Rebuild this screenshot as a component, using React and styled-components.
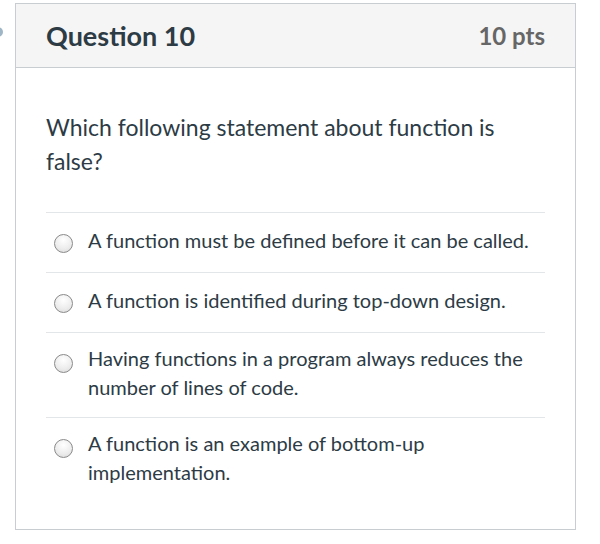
import React from "react";
import styled, { createGlobalStyle } from "styled-components";

const GlobalStyle = createGlobalStyle`
  html, body {
    margin: 0;
    padding: 0;
    background: #ffffff;
    font-family: Lato, "Open Sans", sans-serif;
  }
`;

const answers = [
  "A function must be defined before it can be called.",
  "A function is identified during top-down design.",
  "Having functions in a program always reduces the number of lines of code.",
  "A function is an example of bottom-up implementation.",
];

const Page = () => {
  return (
    <>
      <GlobalStyle />
      <Wrap>
        <Marker />
        <Card>
          <Header>
            <Title>Question 10</Title>
            <Points>10 pts</Points>
          </Header>
          <Body>
            <Prompt>Which following statement about function is false?</Prompt>
            <Answers>
              {answers.map((text, i) => (
                <Answer key={i}>
                  <Radio />
                  <AnswerText>{text}</AnswerText>
                </Answer>
              ))}
            </Answers>
          </Body>
        </Card>
      </Wrap>
    </>
  );
};

export default Page;

const Wrap = styled.div`
  position: relative;
  padding: 3px 0 0 15px;
`;

const Marker = styled.div`
  position: absolute;
  left: -7px;
  top: 27px;
  width: 10px;
  height: 10px;
  border-radius: 50%;
  background: #9fb6c6;
`;

const Card = styled.div`
  width: 559px;
  border: 1px solid #c7cdd1;
  box-sizing: content-box;
`;

const Header = styled.div`
  display: flex;
  align-items: center;
  justify-content: space-between;
  height: 63px;
  padding: 0 30px;
  background: #f5f5f5;
  border-bottom: 1px solid #c7cdd1;
`;

const Title = styled.div`
  font-weight: 700;
  font-size: 27px;
  color: #2d3b45;
`;

const Points = styled.div`
  font-weight: 700;
  font-size: 24px;
  color: #666666;
`;

const Body = styled.div`
  padding: 42px 30px 27px;
`;

const Prompt = styled.div`
  font-size: 23px;
  line-height: 34px;
  color: #2d3b45;
  width: 470px;
`;

const Answers = styled.div`
  margin-top: 34px;
  border-top: 1px solid #e3e6e8;
`;

const Answer = styled.div`
  display: flex;
  align-items: flex-start;
  padding: 11px 0 15px 8px;
  border-bottom: 1px solid #e3e6e8;

  &:last-child {
    border-bottom: none;
  }
`;

const Radio = styled.span`
  flex: none;
  width: 17px;
  height: 17px;
  margin-top: 10px;
  margin-right: 15px;
  border-radius: 50%;
  border: 1px solid #8a8a8a;
  background: radial-gradient(circle at 50% 30%, #ffffff 0%, #ececec 60%, #d6d6d6 100%);
`;

const AnswerText = styled.div`
  display: flex;
  align-items: center;
  min-height: 33px;
  font-size: 20px;
  line-height: 29px;
  color: #2d3b45;
  max-width: 458px;
`;
